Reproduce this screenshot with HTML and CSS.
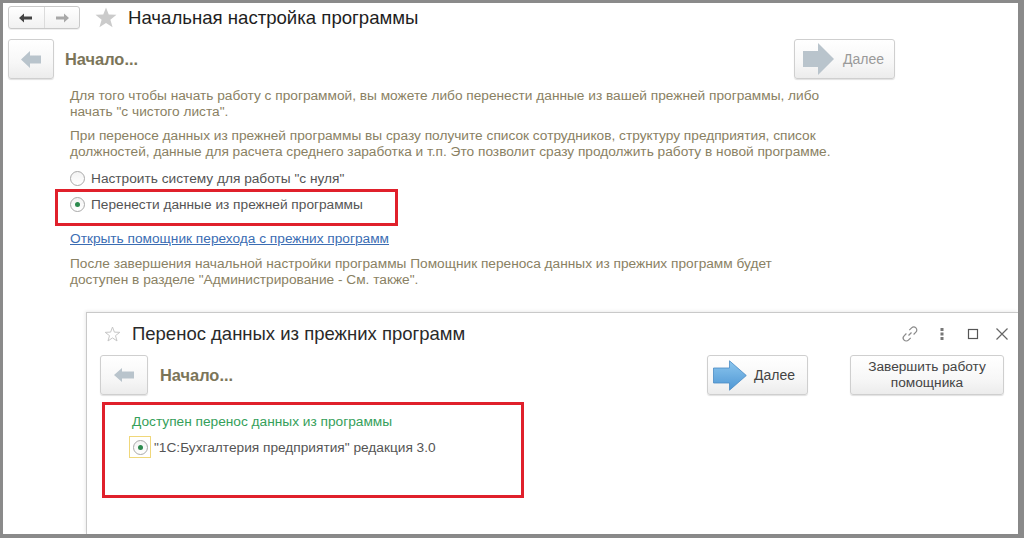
FILE: index.html
```html
<!DOCTYPE html>
<html lang="ru">
<head>
<meta charset="utf-8">
<title>Начальная настройка программы</title>
<link rel="stylesheet" href="styles.css">
</head>
<body>
<div class="frame">
  <div class="main">
    <div class="titlebar">
      <div class="navgroup">
        <span class="navbtn">
          <svg width="14" height="10" viewBox="0 0 14 10"><path d="M0 5 L5 0.5 L5 3.6 L13 3.6 L13 6.4 L5 6.4 L5 9.5 Z" fill="#444"/></svg>
        </span>
        <span class="navbtn">
          <svg width="14" height="10" viewBox="0 0 14 10"><path d="M14 5 L9 0.5 L9 3.6 L1 3.6 L1 6.4 L9 6.4 L9 9.5 Z" fill="#a8a8a8"/></svg>
        </span>
      </div>
      <svg class="star" width="22" height="21" viewBox="0 0 24 23"><path d="M12 0.5 L15 8.3 L23.5 8.6 L16.8 13.9 L19.2 22.2 L12 17.4 L4.8 22.2 L7.2 13.9 L0.5 8.6 L9 8.3 Z" fill="#cbcbcb"/></svg>
      <h1 class="title">Начальная настройка программы</h1>
    </div>

    <div class="steprow">
      <button class="bigbtn backbtn">
        <svg width="20" height="17" viewBox="0 0 20 17"><path d="M0 8.5 L9 0 L9 4.5 L20 4.5 L20 12.5 L9 12.5 L9 17 Z" fill="#b9c4cc"/></svg>
      </button>
      <div class="steptitle">Начало...</div>
      <button class="bigbtn nextbtn disabled">
        <svg width="31" height="32" viewBox="0 0 31 32"><path d="M0 8 L15 8 L15 0 L31 16 L15 32 L15 24 L0 24 Z" fill="#b9c4cc"/></svg>
        <span>Далее</span>
      </button>
    </div>

    <div class="content">
      <p class="note">Для того чтобы начать работу с программой, вы можете либо перенести данные из вашей прежней программы, либо<br>начать "с чистого листа".</p>
      <p class="note">При переносе данных из прежней программы вы сразу получите список сотрудников, структуру предприятия, список<br>должностей, данные для расчета среднего заработка и т.п. Это позволит сразу продолжить работу в новой программе.</p>
      <div class="radio-list">
        <label class="radio"><span class="circle"></span>Настроить систему для работы "с нуля"</label>
        <label class="radio"><span class="circle checked"></span>Перенести данные из прежней программы</label>
      </div>
      <a class="link" href="#">Открыть помощник перехода с прежних программ</a>
      <p class="note">После завершения начальной настройки программы Помощник переноса данных из прежних программ будет<br>доступен в разделе "Администрирование - См. также".</p>
    </div>
    <div class="highlight hl-main"></div>
  </div>

  <div class="dialog">
    <div class="dlg-head">
      <svg class="ostar" width="17" height="16" viewBox="0 0 24 23"><path d="M12 1.5 L14.7 8.8 L22.5 9.1 L16.3 13.9 L18.5 21.5 L12 17.1 L5.5 21.5 L7.7 13.9 L1.5 9.1 L9.3 8.8 Z" fill="none" stroke="#c4c4c4" stroke-width="1.4"/></svg>
      <div class="dlg-title">Перенос данных из прежних программ</div>
      <div class="dlg-icons">
        <svg width="18" height="18" viewBox="0 0 18 18"><g fill="none" stroke="#8a8a8a" stroke-width="1.2"><path d="M7.5 10.5 L10.5 7.5"/><path d="M8.3 5.2 L10.6 2.9 A2.6 2.6 0 0 1 14.9 7.2 L12.6 9.5"/><path d="M9.7 12.8 L7.4 15.1 A2.6 2.6 0 0 1 3.1 10.8 L5.4 8.5"/></g></svg>
        <svg width="6" height="14" viewBox="0 0 6 14"><g fill="#777"><rect x="1.5" y="1" width="3" height="3"/><rect x="1.5" y="5.5" width="3" height="3"/><rect x="1.5" y="10" width="3" height="3"/></g></svg>
        <svg width="12" height="12" viewBox="0 0 12 12"><rect x="1.5" y="1.5" width="9" height="9" fill="none" stroke="#555" stroke-width="1.2"/></svg>
        <svg width="14" height="14" viewBox="0 0 14 14"><path d="M1.5 1.5 L12.5 12.5 M12.5 1.5 L1.5 12.5" stroke="#666" stroke-width="1.2"/></svg>
      </div>
    </div>
    <div class="steprow dlg-steprow">
      <button class="bigbtn backbtn">
        <svg width="20" height="14" viewBox="0 0 20 14"><path d="M0 7 L8 0 L8 3.5 L20 3.5 L20 10.5 L8 10.5 L8 14 Z" fill="#b9c4cc"/></svg>
      </button>
      <div class="steptitle">Начало...</div>
      <button class="bigbtn nextbtn active">
        <svg width="34" height="31" viewBox="0 0 34 31">
          <defs><linearGradient id="blu" x1="0" y1="0" x2="0" y2="1"><stop offset="0" stop-color="#8cc6ee"/><stop offset="1" stop-color="#4f97d4"/></linearGradient></defs>
          <path d="M0.5 8 L16.5 8 L16.5 0.8 L33.3 15.5 L16.5 30.2 L16.5 23 L0.5 23 Z" fill="url(#blu)" stroke="#4a8cc4" stroke-width="0.8"/>
        </svg>
        <span>Далее</span>
      </button>
      <button class="bigbtn finishbtn">Завершить работу<br>помощника</button>
    </div>
    <div class="dlg-body">
      <div class="green">Доступен перенос данных из программы</div>
      <label class="radio dlg-radio"><span class="focus"><span class="circle checked"></span></span>"1С:Бухгалтерия предприятия" редакция 3.0</label>
    </div>
  </div>
</div>
</body>
</html>
```

FILE: styles.css
```css
* { box-sizing: border-box; }
html, body { margin: 0; padding: 0; }
body {
  width: 1024px;
  height: 538px;
  overflow: hidden;
  font-family: "Liberation Sans", Arial, sans-serif;
  background: #fff;
}
.frame {
  position: relative;
  width: 1024px;
  height: 538px;
  border-style: solid;
  border-color: #8a8a8a;
  border-width: 3px 6px 4px 3px;
  background: #fff;
}
.main {
  position: relative;
  padding: 3px 0 0 5px;
}
.titlebar {
  display: flex;
  align-items: center;
  height: 23px;
}
.navgroup {
  display: flex;
  width: 72px;
  height: 23px;
  border: 1px solid #c9c9c9;
  border-radius: 3px;
  background: linear-gradient(#ffffff, #f1f1f1);
  box-shadow: 0 1px 0 rgba(0,0,0,0.06);
}
.navbtn {
  flex: 1;
  display: flex;
  align-items: center;
  justify-content: center;
}
.navbtn + .navbtn { border-left: 1px solid #dcdcdc; }
.star { margin-left: 15px; }
.title {
  margin: 0 0 0 11px;
  font-weight: normal;
  font-size: 18.6px;
  color: #1e1e1e;
  line-height: 23px;
}
.steprow {
  display: flex;
  align-items: center;
  margin-top: 10px;
  height: 40px;
}
.bigbtn {
  display: flex;
  align-items: center;
  justify-content: center;
  height: 40px;
  padding: 0;
  border: 1px solid #cfcfcf;
  border-radius: 3px;
  background: linear-gradient(#ffffff 0%, #f7f7f7 60%, #ececec 100%);
  box-shadow: 0 1px 1px rgba(0,0,0,0.12);
  font-family: "Liberation Sans", Arial, sans-serif;
  font-size: 13.7px;
  color: #444;
}
.backbtn { width: 46px; }
.steptitle {
  margin-left: 11px;
  font-size: 16.4px;
  font-weight: bold;
  color: #7b7559;
  flex: 1;
}
.nextbtn {
  width: 101px;
  justify-content: flex-start;
  padding-left: 8px;
}
.nextbtn span { margin-left: 9px; font-size: 14px; }
.nextbtn.disabled span { color: #9a9a9a; }
.main .nextbtn { margin-right: 123px; }
.content {
  padding-left: 62px;
  padding-top: 9px;
}
.note {
  margin: 0 0 8px 0;
  font-size: 13.7px;
  line-height: 16px;
  color: #8a8163;
}
.radio-list {
  display: flex;
  flex-direction: column;
  gap: 10px;
  margin-top: 10px;
}
.radio {
  display: flex;
  align-items: center;
  height: 16px;
  font-size: 13.7px;
  color: #555;
}
.circle {
  position: relative;
  width: 15px;
  height: 15px;
  border: 1px solid #a9a9a9;
  border-radius: 50%;
  background: linear-gradient(#f3f3f3, #ffffff);
  margin-right: 6px;
  flex: none;
}
.circle.checked::after {
  content: "";
  position: absolute;
  left: 4px;
  top: 4px;
  width: 5px;
  height: 5px;
  border-radius: 50%;
  background: #2d8a4e;
}
.link {
  display: block;
  margin-top: 19px;
  margin-bottom: 9px;
  font-size: 13.7px;
  line-height: 16px;
  color: #3b6db3;
  text-decoration: underline;
}
.highlight {
  position: absolute;
  border: 3px solid #e0202b;
}
.hl-main {
  left: 52px;
  top: 186px;
  width: 343px;
  height: 37px;
}
.dialog {
  position: absolute;
  left: 83px;
  top: 309px;
  right: 0;
  bottom: 0;
  border-left: 1px solid #c9c9c9;
  border-top: 1px solid #c9c9c9;
  background: #fff;
  box-shadow: -1px -1px 3px rgba(0,0,0,0.08);
  padding-left: 13px;
}
.dlg-head {
  display: flex;
  align-items: center;
  height: 40px;
  padding-top: 1px;
}
.ostar { margin-left: 4px; }
.dlg-title {
  margin-left: 11px;
  font-size: 18.5px;
  color: #2a2a2a;
  flex: 1;
}
.dlg-icons {
  display: flex;
  align-items: center;
  gap: 16px;
  margin-right: 9px;
}
.dlg-icons svg:nth-child(2) { margin-left: 4px; }
.dlg-icons svg:nth-child(3) { margin-left: 6px; }
.dlg-steprow {
  margin-top: 2px;
}
.dlg-steprow .steptitle { margin-left: 12px; }
.dlg-steprow .backbtn { width: 48px; }
.nextbtn.active { padding-left: 5px; }
.nextbtn.active span { margin-left: 7px; color: #444; }
.finishbtn {
  width: 154px;
  margin-left: 42px;
  margin-right: 14px;
  line-height: 16px;
  text-align: center;
}
.dlg-body {
  position: relative;
  margin-top: 7px;
  margin-left: 2px;
  width: 422px;
  height: 96px;
  border: 3px solid #e0202b;
  padding: 9px 0 0 27px;
}
.green {
  font-size: 13.7px;
  line-height: 16px;
  color: #35a05a;
}
.dlg-radio {
  margin-top: 6px;
  margin-left: -3px;
  height: 22px;
  color: #555;
}
.focus {
  display: flex;
  align-items: center;
  justify-content: center;
  width: 22px;
  height: 22px;
  border: 1px solid #f0d77a;
  margin-right: 3px;
}
.focus .circle { margin-right: 0; }
```
